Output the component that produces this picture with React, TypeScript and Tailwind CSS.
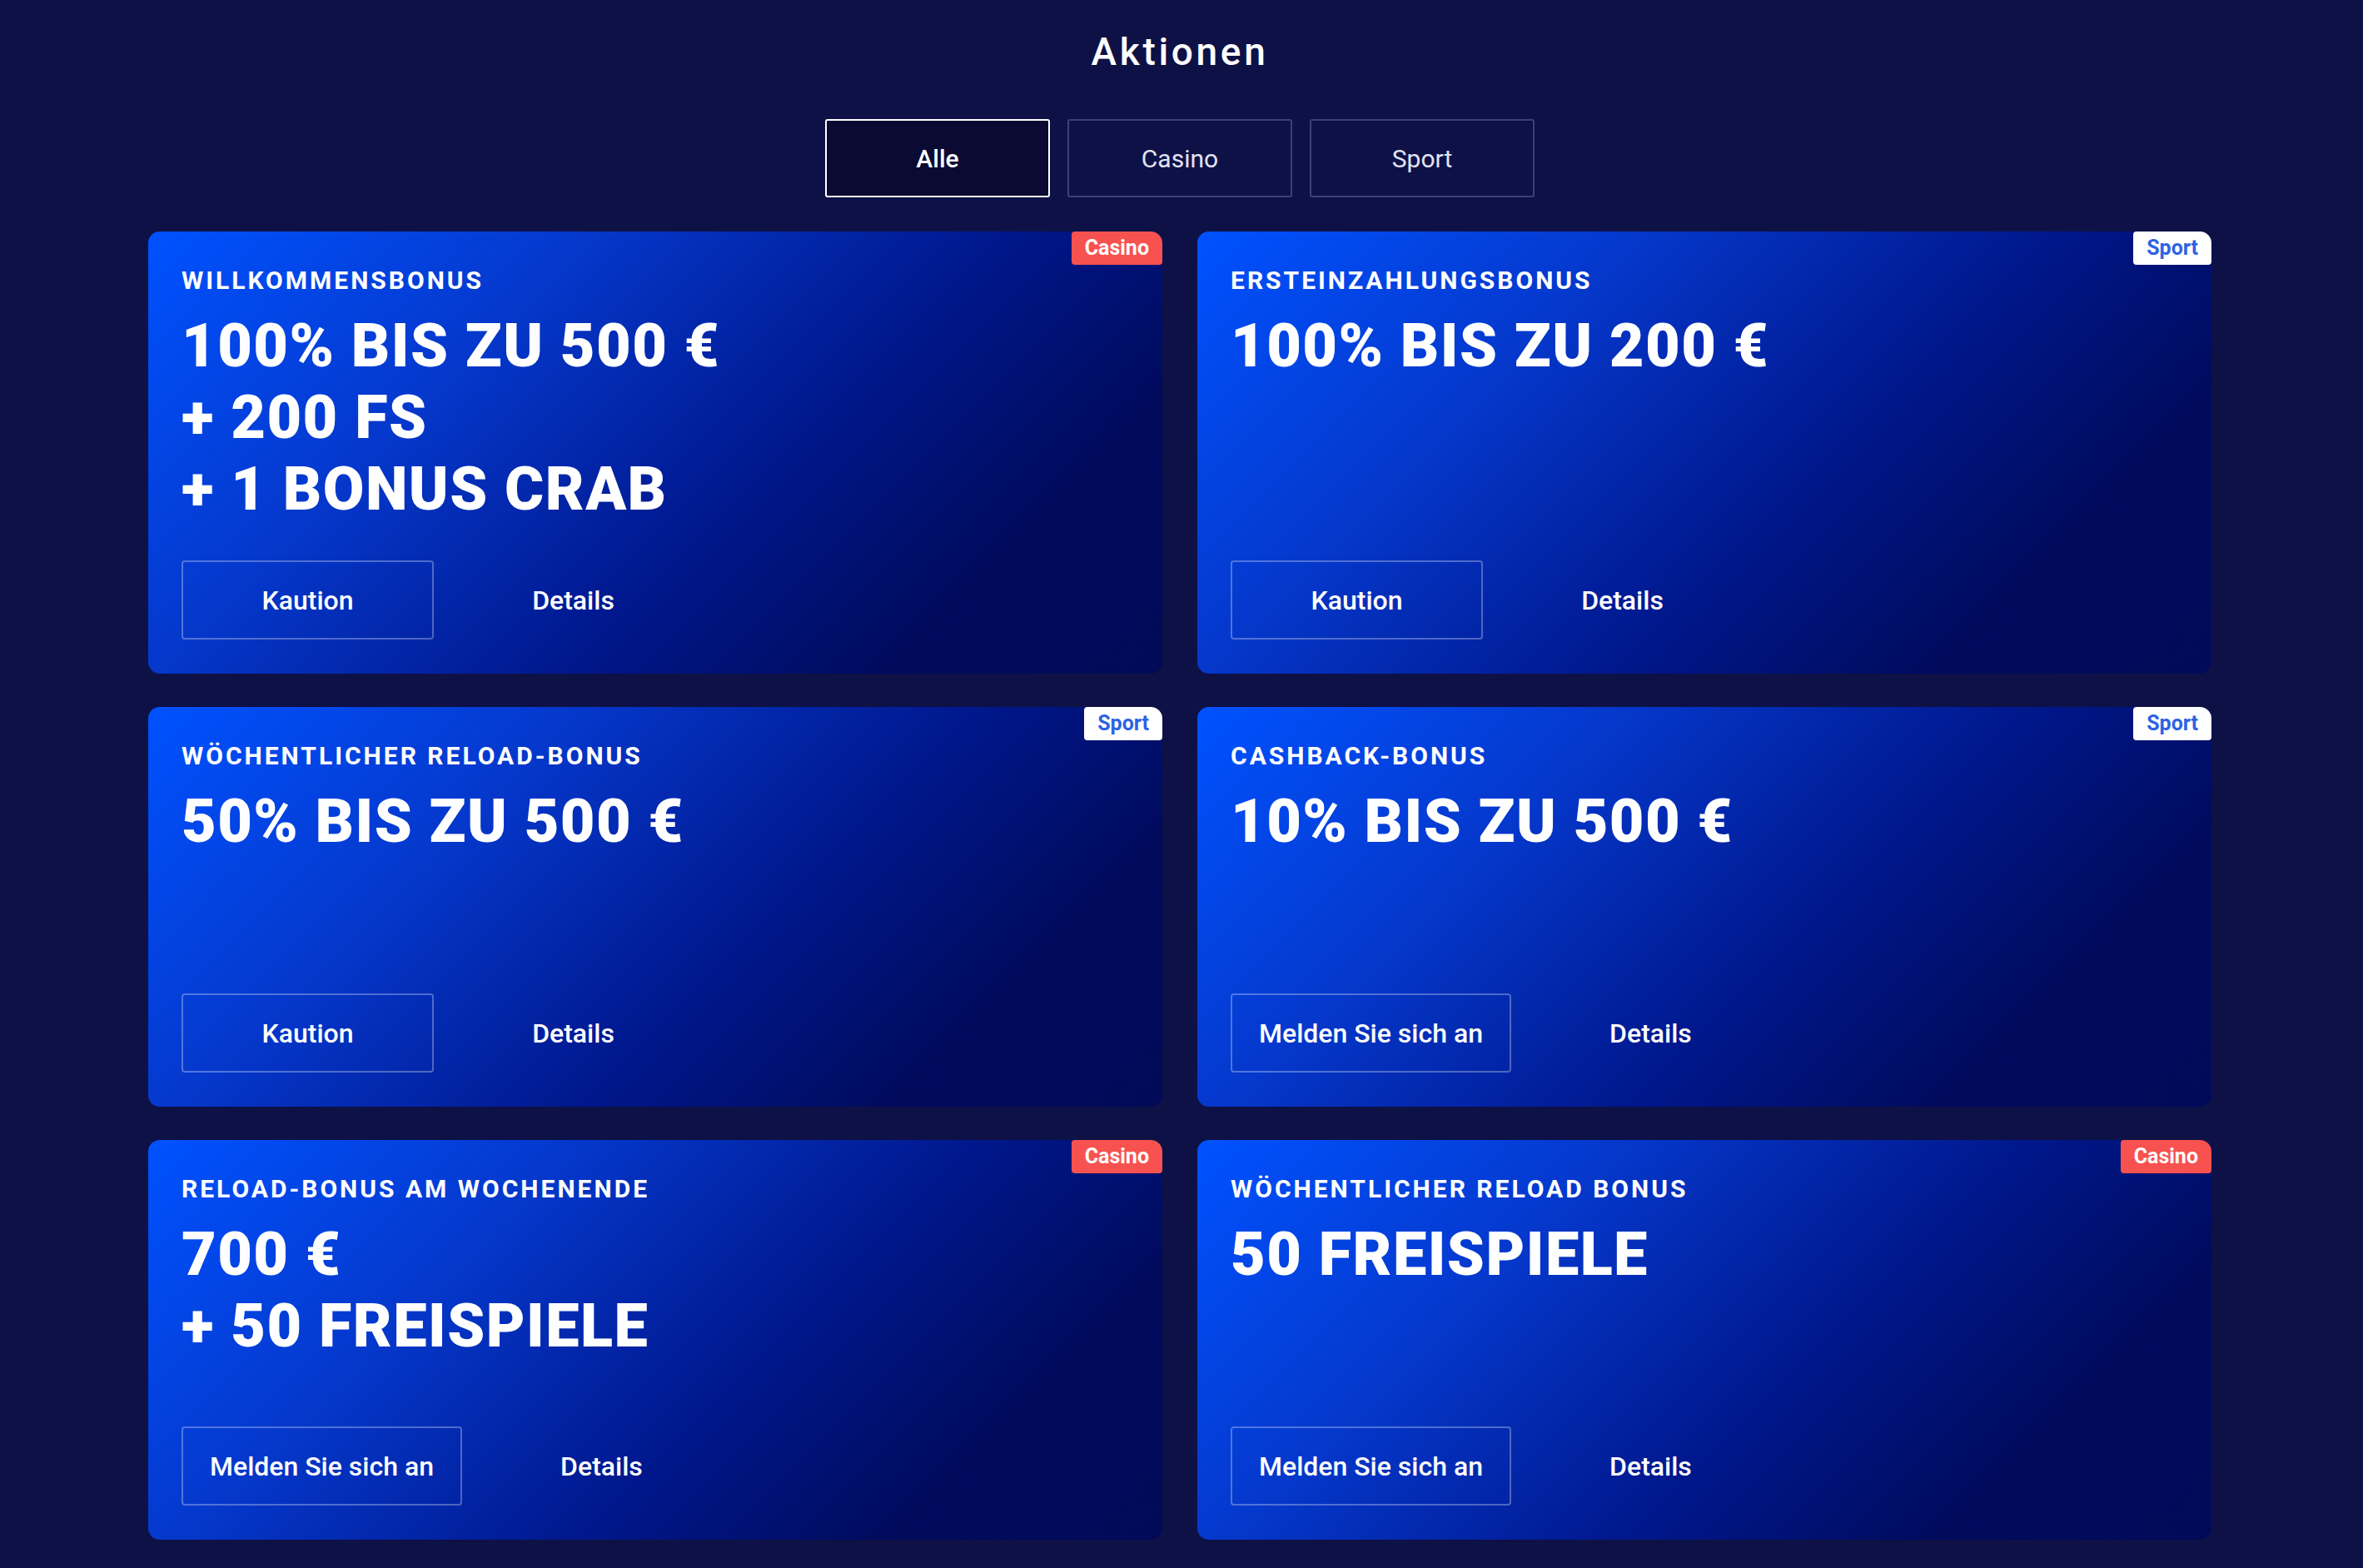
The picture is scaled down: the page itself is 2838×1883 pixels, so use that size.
import React from "react";

type Promo = {
  tag: "Casino" | "Sport";
  label: string;
  lines: string[];
  cta: string;
};

const PROMOS: Promo[] = [
  {
    tag: "Casino",
    label: "Willkommensbonus",
    lines: ["100% BIS ZU 500 €", "+ 200 FS", "+ 1 BONUS CRAB"],
    cta: "Kaution",
  },
  {
    tag: "Sport",
    label: "Ersteinzahlungsbonus",
    lines: ["100% BIS ZU 200 €"],
    cta: "Kaution",
  },
  {
    tag: "Sport",
    label: "Wöchentlicher Reload-Bonus",
    lines: ["50% BIS ZU 500 €"],
    cta: "Kaution",
  },
  {
    tag: "Sport",
    label: "Cashback-Bonus",
    lines: ["10% BIS ZU 500 €"],
    cta: "Melden Sie sich an",
  },
  {
    tag: "Casino",
    label: "Reload-Bonus am Wochenende",
    lines: ["700 €", "+ 50 FREISPIELE"],
    cta: "Melden Sie sich an",
  },
  {
    tag: "Casino",
    label: "Wöchentlicher Reload Bonus",
    lines: ["50 FREISPIELE"],
    cta: "Melden Sie sich an",
  },
];

const FILTERS = ["Alle", "Casino", "Sport"];

function Tag({ tag }: { tag: Promo["tag"] }) {
  const tone =
    tag === "Casino" ? "bg-[#f7524f] text-white" : "bg-white text-[#2d62e3]";
  return (
    <span
      className={`absolute top-0 right-0 flex h-[40px] items-center rounded-[4px] rounded-tr-[14px] px-[16px] text-[25px] font-bold ${tone}`}
    >
      {tag}
    </span>
  );
}

function PromoCard({ promo }: { promo: Promo }) {
  return (
    <div className="relative flex min-h-[480px] flex-col rounded-[14px] bg-[linear-gradient(135deg,#0052ff_0%,#0538cc_30%,#00188e_58%,#000b5e_80%,#000a58_100%)] px-[40px] pt-[41px] pb-[41px] text-white">
      <Tag tag={promo.tag} />

      {/* Label + headline */}
      <div className="text-[30px] leading-[36px] font-bold tracking-[0.1em] uppercase">
        {promo.label}
      </div>
      <div className="mt-[18px] text-[72px] leading-[86px] font-black tracking-[0.02em]">
        {promo.lines.map((l) => (
          <div key={l}>{l}</div>
        ))}
      </div>

      {/* Actions */}
      <div className="mt-auto flex items-center gap-[16px] pt-[42px]">
        <button className="h-[95px] min-w-[303px] rounded-[4px] border-2 border-white/30 px-[32px] text-[32px] font-medium text-white">
          {promo.cta}
        </button>
        <button className="h-[95px] min-w-[303px] px-[32px] text-[32px] font-medium text-white">
          Details
        </button>
      </div>
    </div>
  );
}

export default function App() {
  return (
    <div className="min-h-screen bg-[#0e1146] font-['Roboto',sans-serif]">
      <div className="w-[2834px] pt-[35px] pb-[40px]">
        <h1 className="text-center text-[46px] leading-[54px] font-medium tracking-[0.08em] text-white">
          Aktionen
        </h1>

        {/* Filter tabs */}
        <div className="mt-[54px] flex justify-center gap-[21px]">
          {FILTERS.map((f, i) => (
            <button
              key={f}
              className={`h-[94px] w-[270px] rounded-[3px] border-2 text-[30px] ${
                i === 0
                  ? "border-white bg-[#0a0a33] font-medium text-white"
                  : "border-[#3b4079] text-[#e2e3f2]"
              }`}
            >
              {f}
            </button>
          ))}
        </div>

        {/* Promo grid */}
        <div className="mx-auto mt-[41px] grid w-[2478px] grid-cols-2 gap-x-[42px] gap-y-[40px]">
          {PROMOS.map((p) => (
            <PromoCard key={p.label} promo={p} />
          ))}
        </div>
      </div>
    </div>
  );
}
